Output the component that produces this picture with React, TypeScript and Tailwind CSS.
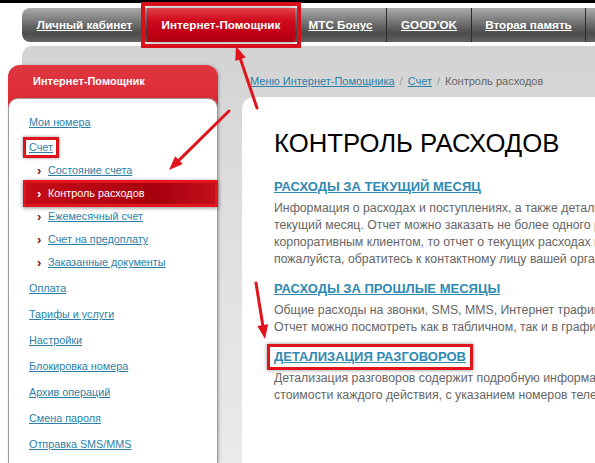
import React from 'react';

type Arrow = { x1: number; y1: number; x2: number; y2: number };

// red annotation arrows drawn over the screenshot
const arrows: Arrow[] = [
  { x1: 257, y1: 108, x2: 236, y2: 46 },
  { x1: 229, y1: 111, x2: 169, y2: 170 },
  { x1: 256, y1: 283, x2: 265, y2: 339 },
];

const tabs = [
  { label: 'Личный кабинет', width: 'w-[125px]' },
  { label: 'Интернет-Помощник', width: 'w-[148px]', active: true },
  { label: 'МТС Бонус', width: 'w-[92px]', sep: true },
  { label: "GOOD'OK", width: 'w-[85px]', sep: true },
  { label: 'Вторая память', width: 'w-[114px]', sep: true },
];

const subItems = ['Состояние счета', 'Контроль расходов', 'Ежемесячный счет', 'Счет на предоплату', 'Заказанные документы'];
const bottomItems = ['Оплата', 'Тарифы и услуги', 'Настройки', 'Блокировка номера', 'Архив операций', 'Смена пароля', 'Отправка SMS/MMS'];

const sections = [
  {
    title: 'Расходы за текущий месяц',
    lines: [
      'Информация о расходах и поступлениях, а также детальная информация о платежах за',
      'текущий месяц. Отчет можно заказать не более одного раза в сутки. Если вы являетесь',
      'корпоративным клиентом, то отчет о текущих расходах может заказать ответственное лицо,',
      'пожалуйста, обратитесь к контактному лицу вашей организации.',
    ],
  },
  {
    title: 'Расходы за прошлые месяцы',
    lines: [
      'Общие расходы на звонки, SMS, MMS, Интернет трафик, подписки и прочие услуги.',
      'Отчет можно посмотреть как в табличном, так и в графическом виде.',
    ],
  },
  {
    title: 'Детализация разговоров',
    boxed: true,
    lines: [
      'Детализация разговоров содержит подробную информацию о звонках, SMS и других услугах',
      'стоимости каждого действия, с указанием номеров телефонов.',
    ],
  },
];

const ArrowShape: React.FC<Arrow> = ({ x1, y1, x2, y2 }) => {
  const len = Math.hypot(x2 - x1, y2 - y1);
  const dx = (x2 - x1) / len;
  const dy = (y2 - y1) / len;
  const bx = x2 - dx * 14;
  const by = y2 - dy * 14;
  const w = 5.5;
  const points = `${x2},${y2} ${bx - dy * w},${by + dx * w} ${bx + dy * w},${by - dx * w}`;
  return (
    <g>
      <line x1={x1} y1={y1} x2={bx + dx * 2} y2={by + dy * 2} stroke="#e0141c" strokeWidth={3} strokeLinecap="round" />
      <polygon points={points} fill="#e0141c" />
    </g>
  );
};

const Bullet: React.FC<{ light?: boolean }> = ({ light }) => (
  <span className={`w-[11px] text-[13px] font-bold leading-none ${light ? 'text-white' : 'text-[#7d0d1c]'}`}>›</span>
);

export default function App() {
  return (
    <div className="relative w-[595px] h-[463px] overflow-hidden bg-white font-['Liberation_Sans',Arial,sans-serif]">
      <div className="h-[3px] bg-black" />

      {/* Top tabs */}
      <div className="mt-[5px] ml-[22px] h-[34px] flex rounded-l-[8px] bg-[linear-gradient(to_bottom,#ababab,#767676_40%,#4c4c4c_75%,#646464)]">
        {tabs.map((t) => (
          <div
            key={t.label}
            className={`${t.width} h-full flex items-center justify-center text-[11.7px] font-bold text-white ${
              t.active
                ? 'relative z-10 bg-[linear-gradient(to_bottom,#e3414b,#cf0d1f_35%,#c20017_70%,#b2000f)] outline-solid outline-4 outline-[#d90f1b] outline-offset-2 shadow-[0_0_6px_rgba(0,0,0,0.5)]'
                : 'underline'
            } ${t.sep ? 'border-r border-[#2c2c2c]' : ''}`}
          >
            {t.label}
          </div>
        ))}
      </div>

      {/* Gray content area */}
      <div className="mt-[4px] ml-[22px] h-[417px] flex rounded-tl-[10px] bg-[linear-gradient(to_bottom,#d3d3d3,#dcdcdc_30%,#eaeaea)]">
        {/* Sidebar */}
        <div className="-ml-[14px] mt-[19px] w-[210px] shrink-0 rounded-t-[12px] bg-[linear-gradient(to_bottom,#e0363f,#c80818_40%,#b8000f)] shadow-[1px_0_3px_rgba(0,0,0,0.25)]">
          <div className="h-[33px] flex items-center pl-[25px] text-[11px] font-bold text-white">Интернет-Помощник</div>
          <div className="h-[400px] rounded-t-[10px] border border-[#9c9c9c] bg-white pt-[10px] text-[10.8px] text-[#2b7fa9]">
            <div className="h-[26px] flex items-center pl-[20px]">
              <span className="underline">Мои номера</span>
            </div>
            <div className="h-[24px] flex items-center pl-[20px]">
              <span className="-ml-[6px] -my-[2px] px-[3px] py-[1px] border-[3px] border-[#e0141c] shadow-[0_0_3px_rgba(0,0,0,0.45)] underline leading-[13px]">
                Счет
              </span>
            </div>
            <div className="flex flex-col pb-[1px]">
              {subItems.map((s) =>
                s === 'Контроль расходов' ? (
                  <div key={s} className="h-[23px] flex flex-col">
                    <div className="-my-[2px] h-[27px] ml-[14px] -mr-[1px] flex items-center pl-[11px] border-[3px] border-[#e3161e] bg-[linear-gradient(to_right,#c50c18,#a8000e_70%,#c3101c)] shadow-[0_1px_4px_rgba(0,0,0,0.45)] text-white">
                      <Bullet light />
                      <span>{s}</span>
                    </div>
                  </div>
                ) : (
                  <div key={s} className="h-[23px] flex items-center pl-[28px]">
                    <Bullet />
                    <span className="underline">{s}</span>
                  </div>
                ),
              )}
            </div>
            {bottomItems.map((s) => (
              <div key={s} className="h-[26px] flex items-center pl-[20px]">
                <span className="underline">{s}</span>
              </div>
            ))}
          </div>
        </div>

        {/* Breadcrumb + main panel */}
        <div className="ml-[24px] flex flex-col">
          <div className="h-[51px] pt-[27px] pl-[8px] text-[11px] leading-[16px] text-[#666] whitespace-nowrap">
            <span className="underline text-[#2b7fa9]">Меню Интернет-Помощника</span>
            <span className="mx-[5px] text-[#999]">/</span>
            <span className="underline text-[#2b7fa9]">Счет</span>
            <span className="mx-[5px] text-[#999]">/</span>
            <span>Контроль расходов</span>
          </div>
          <div className="w-[600px] flex-1 rounded-tl-[12px] bg-white pl-[32px] pt-[31px]">
            <h1 className="text-[25.7px] leading-[30px] text-black whitespace-nowrap">КОНТРОЛЬ РАСХОДОВ</h1>
            <div className="mt-[20px] flex flex-col">
              {sections.map((sec, i) => (
                <div key={sec.title} className={i === 0 ? '' : 'mt-[12px]'}>
                  {sec.boxed ? (
                    <div className="h-[18px] flex items-center">
                      <span className="-ml-[7px] -my-[4px] px-[4px] py-[2px] border-[3px] border-[#e0141c] shadow-[0_0_4px_rgba(0,0,0,0.45)] text-[13px] leading-[16px] font-bold uppercase underline text-[#2e8ab3] whitespace-nowrap">
                        {sec.title}
                      </span>
                    </div>
                  ) : (
                    <div className="h-[18px] text-[13px] leading-[18px] font-bold uppercase underline text-[#2e8ab3] whitespace-nowrap">{sec.title}</div>
                  )}
                  <div className="mt-[4px] text-[12.3px] leading-[17px] text-[#666]">
                    {sec.lines.map((l) => (
                      <div key={l} className="whitespace-nowrap">{l}</div>
                    ))}
                  </div>
                </div>
              ))}
            </div>
          </div>
        </div>
      </div>

      <svg className="pointer-events-none absolute inset-0 z-20" width="595" height="463" viewBox="0 0 595 463">
        {arrows.map((a, i) => (
          <ArrowShape key={i} {...a} />
        ))}
      </svg>
    </div>
  );
}
